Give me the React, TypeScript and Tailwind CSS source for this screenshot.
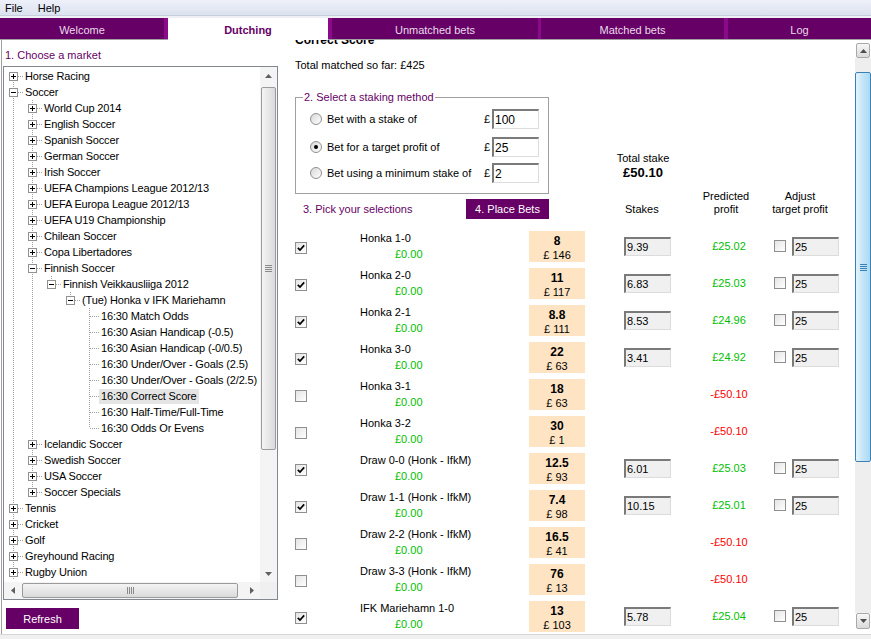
import React from 'react';

type Kind = 'plus' | 'minus' | 'leaf';
type TNode = { label: string; level: number; kind: Kind; last: boolean; anc: boolean[]; first?: boolean; selected?: boolean };

const a1 = [true];
const a4 = [true, true, false, false];
const treeRows: TNode[] = [
  { label: 'Horse Racing', level: 0, kind: 'plus', last: false, anc: [], first: true },
  { label: 'Soccer', level: 0, kind: 'minus', last: false, anc: [] },
  { label: 'World Cup 2014', level: 1, kind: 'plus', last: false, anc: a1 },
  { label: 'English Soccer', level: 1, kind: 'plus', last: false, anc: a1 },
  { label: 'Spanish Soccer', level: 1, kind: 'plus', last: false, anc: a1 },
  { label: 'German Soccer', level: 1, kind: 'plus', last: false, anc: a1 },
  { label: 'Irish Soccer', level: 1, kind: 'plus', last: false, anc: a1 },
  { label: 'UEFA Champions League 2012/13', level: 1, kind: 'plus', last: false, anc: a1 },
  { label: 'UEFA Europa League 2012/13', level: 1, kind: 'plus', last: false, anc: a1 },
  { label: 'UEFA U19 Championship', level: 1, kind: 'plus', last: false, anc: a1 },
  { label: 'Chilean Soccer', level: 1, kind: 'plus', last: false, anc: a1 },
  { label: 'Copa Libertadores', level: 1, kind: 'plus', last: false, anc: a1 },
  { label: 'Finnish Soccer', level: 1, kind: 'minus', last: false, anc: a1 },
  { label: 'Finnish Veikkausliiga 2012', level: 2, kind: 'minus', last: true, anc: [true, true] },
  { label: '(Tue) Honka v IFK Mariehamn', level: 3, kind: 'minus', last: true, anc: [true, true, false] },
  { label: '16:30 Match Odds', level: 4, kind: 'leaf', last: false, anc: a4 },
  { label: '16:30 Asian Handicap (-0.5)', level: 4, kind: 'leaf', last: false, anc: a4 },
  { label: '16:30 Asian Handicap (-0/0.5)', level: 4, kind: 'leaf', last: false, anc: a4 },
  { label: '16:30 Under/Over - Goals (2.5)', level: 4, kind: 'leaf', last: false, anc: a4 },
  { label: '16:30 Under/Over - Goals (2/2.5)', level: 4, kind: 'leaf', last: false, anc: a4 },
  { label: '16:30 Correct Score', level: 4, kind: 'leaf', last: false, anc: a4, selected: true },
  { label: '16:30 Half-Time/Full-Time', level: 4, kind: 'leaf', last: false, anc: a4 },
  { label: '16:30 Odds Or Evens', level: 4, kind: 'leaf', last: true, anc: a4 },
  { label: 'Icelandic Soccer', level: 1, kind: 'plus', last: false, anc: a1 },
  { label: 'Swedish Soccer', level: 1, kind: 'plus', last: false, anc: a1 },
  { label: 'USA Soccer', level: 1, kind: 'plus', last: false, anc: a1 },
  { label: 'Soccer Specials', level: 1, kind: 'plus', last: true, anc: a1 },
  { label: 'Tennis', level: 0, kind: 'plus', last: false, anc: [] },
  { label: 'Cricket', level: 0, kind: 'plus', last: false, anc: [] },
  { label: 'Golf', level: 0, kind: 'plus', last: false, anc: [] },
  { label: 'Greyhound Racing', level: 0, kind: 'plus', last: false, anc: [] },
  { label: 'Rugby Union', level: 0, kind: 'plus', last: false, anc: [] },
];

const DOT = '#a0a0a0';

function AncCol({ on }: { on: boolean }) {
  return (
    <svg width="19" height="16" className="shrink-0" shapeRendering="crispEdges">
      {on && <line x1="9.5" y1="0" x2="9.5" y2="16" stroke={DOT} strokeWidth="1" strokeDasharray="1 1" />}
    </svg>
  );
}

function OwnCol({ node }: { node: TNode }) {
  const box = node.kind !== 'leaf';
  return (
    <svg width="21" height="16" className="shrink-0" shapeRendering="crispEdges">
      {!node.first && <line x1="9.5" y1="0" x2="9.5" y2="8" stroke={DOT} strokeWidth="1" strokeDasharray="1 1" />}
      {!node.last && <line x1="9.5" y1="8" x2="9.5" y2="16" stroke={DOT} strokeWidth="1" strokeDasharray="1 1" />}
      <line x1={box ? 14 : 10} y1="8.5" x2="20" y2="8.5" stroke={DOT} strokeWidth="1" strokeDasharray="1 1" />
      {box && (
        <>
          <rect x="5.5" y="4.5" width="8" height="8" fill="#fff" stroke="#919191" strokeWidth="1" />
          <line x1="7" y1="8.5" x2="12" y2="8.5" stroke="#000" strokeWidth="1" />
          {node.kind === 'plus' && <line x1="9.5" y1="6" x2="9.5" y2="11" stroke="#000" strokeWidth="1" />}
        </>
      )}
    </svg>
  );
}

function TreeRow({ node }: { node: TNode }) {
  return (
    <div className="h-[16px] flex items-center whitespace-nowrap tracking-[-0.15px]">
      {node.anc.map((on, i) => (
        <AncCol key={i} on={on} />
      ))}
      <OwnCol node={node} />
      {node.selected ? (
        <span className="ml-[-2px] px-[2px] h-[15px] leading-[15px] bg-[#e5e5e5]">{node.label}</span>
      ) : (
        <span className="leading-[16px]">{node.label}</span>
      )}
    </div>
  );
}

function Tri({ dir, color = '#606060' }: { dir: 'up' | 'down' | 'left' | 'right'; color?: string }) {
  if (dir === 'up')
    return (
      <svg width="7" height="4"><polygon points="0,4 3.5,0 7,4" fill={color} /></svg>
    );
  if (dir === 'down')
    return (
      <svg width="7" height="4"><polygon points="0,0 3.5,4 7,0" fill={color} /></svg>
    );
  if (dir === 'left')
    return (
      <svg width="4" height="7"><polygon points="4,0 0,3.5 4,7" fill={color} /></svg>
    );
  return (
    <svg width="4" height="7"><polygon points="0,0 4,3.5 0,7" fill={color} /></svg>
  );
}

function GripH({ color }: { color: string }) {
  return (
    <svg width="7" height="7" shapeRendering="crispEdges">
      <line x1="0" y1="0.5" x2="7" y2="0.5" stroke={color} />
      <line x1="0" y1="2.5" x2="7" y2="2.5" stroke={color} />
      <line x1="0" y1="4.5" x2="7" y2="4.5" stroke={color} />
      <line x1="0" y1="6.5" x2="7" y2="6.5" stroke={color} />
    </svg>
  );
}

function GripV({ color }: { color: string }) {
  return (
    <svg width="7" height="7" shapeRendering="crispEdges">
      <line x1="0.5" y1="0" x2="0.5" y2="7" stroke={color} />
      <line x1="2.5" y1="0" x2="2.5" y2="7" stroke={color} />
      <line x1="4.5" y1="0" x2="4.5" y2="7" stroke={color} />
      <line x1="6.5" y1="0" x2="6.5" y2="7" stroke={color} />
    </svg>
  );
}

function Check({ checked }: { checked: boolean }) {
  return (
    <div className="w-[12px] h-[12px] border border-[#8e8f8f] bg-linear-to-br from-[#e4e4e4] to-white flex items-center justify-center">
      {checked && (
        <svg width="8" height="8" viewBox="0 0 8 8">
          <path d="M0.8 3.8 L3 6 L7.2 1.4" stroke="#000" strokeWidth="1.7" fill="none" />
        </svg>
      )}
    </div>
  );
}

function Radio({ checked }: { checked: boolean }) {
  return (
    <div className="w-[12px] h-[12px] shrink-0 rounded-full border border-[#8e8f8f] bg-linear-to-br from-[#d8d8d8] to-white flex items-center justify-center">
      {checked && <div className="w-[4px] h-[4px] rounded-full bg-black" />}
    </div>
  );
}

function TextBox({ value, white }: { value: string; white?: boolean }) {
  return (
    <div
      className={
        white
          ? 'w-full h-full bg-white border-t-2 border-l-2 border-b border-r border-t-[#7a7a7a] border-l-[#7a7a7a] border-b-[#dcdcdc] border-r-[#dcdcdc] pl-[1px] flex items-center text-[12px]'
          : 'w-full h-full bg-[#f0f0f0] border-t-2 border-l-2 border-b border-r border-t-[#7a7a7a] border-l-[#7a7a7a] border-b-[#dcdcdc] border-r-[#dcdcdc] pl-[1px] flex items-center'
      }
    >
      {value}
    </div>
  );
}

type Sel = { name: string; checked: boolean; odds: string; liq: string; stake?: string; profit: string };
const sels: Sel[] = [
  { name: 'Honka 1-0', checked: true, odds: '8', liq: '146', stake: '9.39', profit: '£25.02' },
  { name: 'Honka 2-0', checked: true, odds: '11', liq: '117', stake: '6.83', profit: '£25.03' },
  { name: 'Honka 2-1', checked: true, odds: '8.8', liq: '111', stake: '8.53', profit: '£24.96' },
  { name: 'Honka 3-0', checked: true, odds: '22', liq: '63', stake: '3.41', profit: '£24.92' },
  { name: 'Honka 3-1', checked: false, odds: '18', liq: '63', profit: '-£50.10' },
  { name: 'Honka 3-2', checked: false, odds: '30', liq: '1', profit: '-£50.10' },
  { name: 'Draw 0-0 (Honk - IfkM)', checked: true, odds: '12.5', liq: '93', stake: '6.01', profit: '£25.03' },
  { name: 'Draw 1-1 (Honk - IfkM)', checked: true, odds: '7.4', liq: '98', stake: '10.15', profit: '£25.01' },
  { name: 'Draw 2-2 (Honk - IfkM)', checked: false, odds: '16.5', liq: '41', profit: '-£50.10' },
  { name: 'Draw 3-3 (Honk - IfkM)', checked: false, odds: '76', liq: '13', profit: '-£50.10' },
  { name: 'IFK Mariehamn 1-0', checked: true, odds: '13', liq: '103', stake: '5.78', profit: '£25.04' },
];

function SelRow({ s }: { s: Sel }) {
  return (
    <div className="h-[37px] flex items-start shrink-0">
      <div className="mt-[14px]">
        <Check checked={s.checked} />
      </div>
      <div className="ml-[53px] w-[169px] pt-[2px] leading-[16px]">
        <div className="whitespace-nowrap">{s.name}</div>
        <div className="pl-[35px] text-[#00c000]">£0.00</div>
      </div>
      <div className="mt-[3px] w-[56px] h-[31px] bg-[#ffe4c4] flex flex-col items-center pt-[3px] leading-[14px]">
        <div className="font-bold text-[12px]">{s.odds}</div>
        <div>£ {s.liq}</div>
      </div>
      <div className="ml-[39px] mt-[9px] w-[47px] h-[19px]">{s.stake && <TextBox value={s.stake} />}</div>
      <div className={s.checked ? 'w-[103px] pl-[13px] mt-[11px] text-center text-[#00c000]' : 'w-[103px] pl-[13px] mt-[11px] text-center text-[#ff0000]'}>
        {s.profit}
      </div>
      <div className="mt-[12px] w-[12px] h-[12px]">{s.checked && <Check checked={false} />}</div>
      <div className="ml-[6px] mt-[9px] w-[47px] h-[19px]">{s.checked && <TextBox value="25" />}</div>
    </div>
  );
}

function Tab({ label, w }: { label: string; w: string }) {
  return (
    <div className={`${w} h-full bg-[#660066] border-b border-[#a0a0a0] text-[#e9dce9] flex items-center justify-center pt-[2px]`}>
      {label}
    </div>
  );
}

function Sep({ w }: { w: string }) {
  return <div className={`${w} h-full bg-[#8a0a8a] border-b border-[#a0a0a0]`} />;
}

export default function App() {
  return (
    <div className="w-[871px] h-[639px] bg-white overflow-hidden font-['Liberation_Sans',Arial,sans-serif] text-[11px] leading-[14px] text-black flex flex-col">
      {/* menu */}
      <div className="h-[16px] shrink-0 bg-linear-to-b from-[#eef1f9] to-[#dce2ef] border-b border-[#c6cddc] flex items-center">
        <span className="ml-[5px]">File</span>
        <span className="ml-[15px]">Help</span>
      </div>
      <div className="h-[2px] shrink-0 bg-[#eef0f6]" />
      {/* tabs */}
      <div className="h-[22px] shrink-0 flex">
        <Tab label="Welcome" w="w-[164px]" />
        <Sep w="w-[4px]" />
        <div className="w-[160px] h-full bg-white text-[#660066] font-bold flex items-center justify-center pt-[2px]">Dutching</div>
        <Sep w="w-[4px]" />
        <Tab label="Unmatched bets" w="w-[206px]" />
        <Sep w="w-[3px]" />
        <Tab label="Matched bets" w="w-[183px]" />
        <Sep w="w-[4px]" />
        <Tab label="Log" w="flex-1" />
      </div>
      {/* main */}
      <div className="h-[594px] shrink-0 flex">
        {/* left panel */}
        <div className="ml-[1px] w-[289px] border-l border-[#a0a0a0] flex flex-col">
          <div className="mt-[8px] ml-[3px] h-[14px] text-[#660066]">1. Choose a market</div>
          <div className="mt-[4px] ml-[1px] w-[275px] h-[534px] border border-[#828790] flex flex-col">
            <div className="h-[515px] flex">
              <div className="w-[256px] overflow-hidden pt-[1px]">
                {treeRows.map((n, i) => (
                  <TreeRow key={i} node={n} />
                ))}
              </div>
              <div className="w-[17px] bg-[#f4f4f4] flex flex-col">
                <div className="h-[17px] flex items-center justify-center">
                  <Tri dir="up" />
                </div>
                <div className="mt-[3px] h-[363px] mx-[1px] border border-[#9b9b9b] rounded-[2px] bg-linear-to-r from-[#f4f4f4] to-[#dadada] flex items-center justify-center">
                  <GripH color="#8a8a8a" />
                </div>
                <div className="flex-1" />
                <div className="h-[17px] flex items-center justify-center">
                  <Tri dir="down" />
                </div>
              </div>
            </div>
            <div className="h-[17px] flex">
              <div className="w-[256px] bg-[#f4f4f4] flex items-center">
                <div className="w-[17px] h-full flex items-center justify-center">
                  <Tri dir="left" />
                </div>
                <div className="ml-[1px] w-[216px] h-[15px] border border-[#9b9b9b] rounded-[2px] bg-linear-to-b from-[#f4f4f4] to-[#dadada] flex items-center justify-center">
                  <GripV color="#8a8a8a" />
                </div>
                <div className="flex-1" />
                <div className="w-[17px] h-full flex items-center justify-center">
                  <Tri dir="right" />
                </div>
              </div>
              <div className="w-[17px] bg-[#f0f0f0]" />
            </div>
          </div>
          <div className="mt-[8px] ml-[4px] w-[73px] h-[21px] bg-[#660066] text-white flex items-center justify-center">Refresh</div>
        </div>
        {/* right panel */}
        <div className="flex-1 flex">
          <div className="flex-1 overflow-hidden pl-[5px] flex flex-col">
            <div className="mt-[-8px] flex shrink-0">
              <div className="w-[254px] flex flex-col">
                <div className="h-[16px] leading-[16px] font-bold text-[12px]">Correct Score</div>
                <div className="mt-[10px] h-[14px]">Total matched so far: £425</div>
                <fieldset className="mt-[18px] border border-[#a0a0a0] p-0 m-0">
                  <legend className="ml-[7px] px-[1px] leading-[14px] text-[#660066]">2. Select a staking method</legend>
                  <div className="pl-[14px] pr-[9px] pb-[10px] pt-[5px]">
                    <div className="h-[20px] flex items-center">
                      <Radio checked={false} />
                      <span className="ml-[5px]">Bet with a stake of</span>
                      <span className="ml-auto">£</span>
                      <div className="ml-[2px] w-[47px] h-[20px]">
                        <TextBox value="100" white />
                      </div>
                    </div>
                    <div className="mt-[8px] h-[20px] flex items-center">
                      <Radio checked={true} />
                      <span className="ml-[5px]">Bet for a target profit of</span>
                      <span className="ml-auto">£</span>
                      <div className="ml-[2px] w-[47px] h-[20px]">
                        <TextBox value="25" white />
                      </div>
                    </div>
                    <div className="mt-[6px] h-[20px] flex items-center">
                      <Radio checked={false} />
                      <span className="ml-[5px]">Bet using a minimum stake of</span>
                      <span className="ml-auto">£</span>
                      <div className="ml-[2px] w-[47px] h-[20px]">
                        <TextBox value="2" white />
                      </div>
                    </div>
                  </div>
                </fieldset>
                <div className="mt-[5px] h-[20px] flex items-center">
                  <span className="ml-[8px] text-[#660066]">3. Pick your selections</span>
                  <div className="ml-auto w-[83px] h-[20px] bg-[#660066] text-white flex items-center justify-center">4. Place Bets</div>
                </div>
              </div>
              <div className="flex flex-col">
                <div className="mt-[119px] ml-[64px] w-[60px] text-center">
                  <div className="h-[14px]">Total stake</div>
                  <div className="h-[16px] leading-[16px] font-bold text-[13px]">£50.10</div>
                </div>
                <div className="mt-[9px] ml-[75px] flex items-end leading-[13px]">
                  <div className="w-[56px] pl-[1px]">Stakes</div>
                  <div className="w-[92px] text-center">
                    Predicted
                    <br />
                    profit
                  </div>
                  <div className="w-[56px] text-center whitespace-nowrap">
                    Adjust
                    <br />
                    target profit
                  </div>
                </div>
              </div>
            </div>
            <div className="mt-[9px] flex flex-col">
              {sels.map((s, i) => (
                <SelRow key={i} s={s} />
              ))}
            </div>
          </div>
          {/* main scrollbar */}
          <div className="w-[16px] flex flex-col pt-[3px] pb-[5px]">
            <div className="h-[15px] mx-[1px] border border-[#a9a9a9] rounded-[2px] bg-linear-to-b from-[#f7f7f7] to-[#dadada] flex items-center justify-center">
              <Tri dir="up" color="#4d4d4d" />
            </div>
            <div className="h-[14px] bg-[#eeeeee]" />
            <div className="h-[390px] border border-[#3c7fb1] rounded-[2px] bg-linear-to-r from-[#e3f4fc] via-[#c4e5f7] to-[#a9daf5] flex items-center justify-center">
              <GripH color="#3c7fb1" />
            </div>
            <div className="flex-1 bg-[#eeeeee]" />
            <div className="h-[16px] mx-[1px] border border-[#a9a9a9] rounded-[2px] bg-linear-to-b from-[#f7f7f7] to-[#dadada] flex items-center justify-center">
              <Tri dir="down" color="#4d4d4d" />
            </div>
          </div>
        </div>
      </div>
      <div className="h-[5px] shrink-0 border-t border-[#d7d7d7] bg-[#f0f0f0]" />
    </div>
  );
}
